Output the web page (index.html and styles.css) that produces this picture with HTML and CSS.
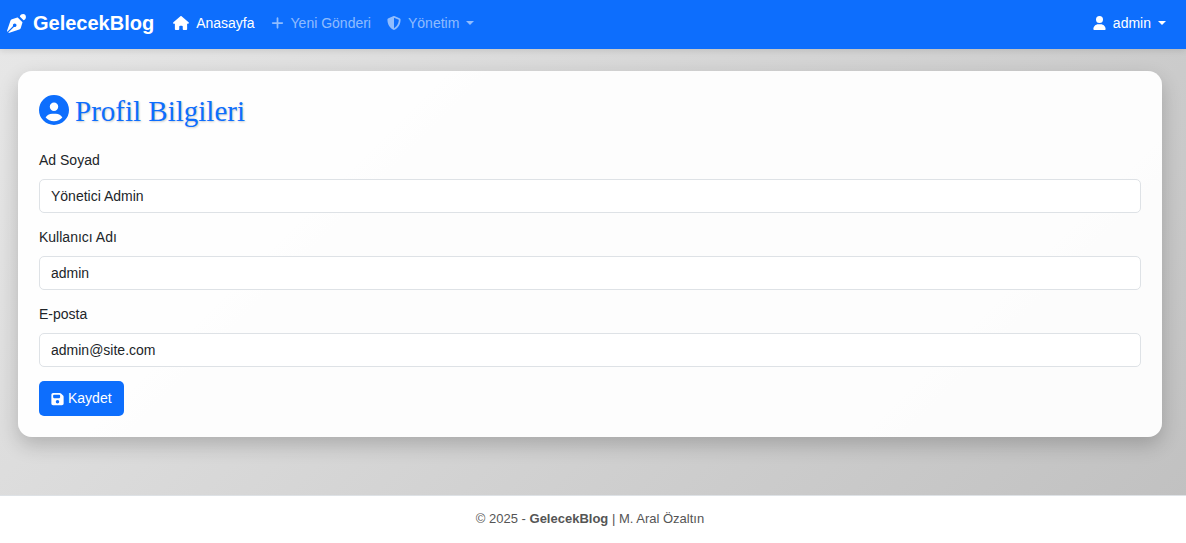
FILE: index.html
```html
<!DOCTYPE html>
<html lang="tr">
<head>
<meta charset="utf-8">
<meta name="viewport" content="width=device-width, initial-scale=1">
<title>Profil Bilgileri - GelecekBlog</title>
<link rel="stylesheet" href="styles.css">
</head>
<body>
<header class="navbar">
  <a class="brand" href="#">
    <svg class="brand-icon" viewBox="0 0 512 512" aria-hidden="true"><path d="M345 66C362 22 394 2 434 2C480 2 510 32 510 78C510 118 490 150 446 167ZM288 94.6l-9.2 2.8L134.7 140.6c-19.9 6-35.7 21.2-42.3 41L3.8 445.8c-3.8 11.3-1 23.9 7.3 32.4L164.7 324.7c-3-6.3-4.7-13.3-4.7-20.7c0-26.5 21.5-48 48-48s48 21.5 48 48s-21.5 48-48 48c-7.4 0-14.4-1.7-20.7-4.7L33.7 500.9c8.6 8.3 21.1 11.2 32.4 7.3l264.3-88.6c19.7-6.6 35-22.4 41-42.3l43.2-144.1 2.7-9.2L288 94.6z"/></svg>
    GelecekBlog
  </a>
  <nav class="nav">
    <a class="nav-link active" href="#">
      <svg class="icon-wide" viewBox="0 0 576 512" aria-hidden="true"><path d="M575.8 255.5c0 18-15 32.1-32 32.1h-32l.7 160.2c0 2.7-.2 5.4-.5 8.1V472c0 22.1-17.9 40-40 40H456c-1.1 0-2.2 0-3.3-.1c-1.4 .1-2.8 .1-4.2 .1H416 392c-22.1 0-40-17.9-40-40V448 384c0-17.7-14.3-32-32-32H256c-17.7 0-32 14.3-32 32v64 24c0 22.1-17.9 40-40 40H160 128.1c-1.5 0-3-.1-4.5-.2c-1.2 .1-2.4 .2-3.6 .2H104c-22.1 0-40-17.9-40-40V360c0-.9 0-1.9 .1-2.8V287.6H32c-18 0-32-14-32-32.1c0-9 3-17 10-24L266.4 8c7-7 15-8 22-8s15 2 21 7L564.8 231.5c8 7 12 15 11 24z"/></svg>
      Anasayfa
    </a>
    <a class="nav-link" href="#">
      <svg class="icon-narrow" viewBox="0 0 448 512" aria-hidden="true"><path d="M256 80c0-17.7-14.3-32-32-32s-32 14.3-32 32V224H48c-17.7 0-32 14.3-32 32s14.3 32 32 32H192V432c0 17.7 14.3 32 32 32s32-14.3 32-32V288H400c17.7 0 32-14.3 32-32s-14.3-32-32-32H256V80z"/></svg>
      Yeni Gönderi
    </a>
    <button class="nav-link caret" type="button" aria-haspopup="true">
      <svg class="icon" viewBox="0 0 512 512" aria-hidden="true"><path d="M256 0c4.6 0 9.2 1 13.4 2.9L457.7 82.8c22 9.3 38.4 31 38.3 57.2c-.5 99.2-41.3 280.7-213.6 363.2c-16.7 8-36.1 8-52.8 0C57.3 420.7 16.5 239.2 16 140c-.1-26.2 16.3-47.9 38.3-57.2L242.7 2.9C246.8 1 251.4 0 256 0zm0 66.8V444.8C394 378 431.1 230.1 432 141.4L256 66.8l0 0z"/></svg>
      Yönetim
    </button>
  </nav>
  <button class="nav-link active caret user-menu" type="button" aria-haspopup="true">
    <svg class="icon-narrow" viewBox="0 0 448 512" aria-hidden="true"><path d="M224 256A128 128 0 1 0 224 0a128 128 0 1 0 0 256zm-45.7 48C79.8 304 0 383.8 0 482.3C0 498.7 13.3 512 29.7 512H418.3c16.4 0 29.7-13.3 29.7-29.7C448 383.8 368.2 304 269.7 304H178.3z"/></svg>
    admin
  </button>
</header>
<main class="content">
  <section class="card">
    <h1 class="title">
      <svg class="title-icon" viewBox="0 0 512 512" aria-hidden="true"><path d="M399 384.2C376.9 345.8 335.4 320 288 320H224c-47.4 0-88.9 25.8-111 64.2c35.2 39.2 86.2 63.8 143 63.8s107.8-24.7 143-63.8zM0 256a256 256 0 1 1 512 0A256 256 0 1 1 0 256zm256 16a72 72 0 1 0 0-144 72 72 0 1 0 0 144z"/></svg>
      Profil Bilgileri
    </h1>
    <form class="form">
      <div class="field">
        <label for="fullname">Ad Soyad</label>
        <input id="fullname" type="text" value="Yönetici Admin">
      </div>
      <div class="field">
        <label for="username">Kullanıcı Adı</label>
        <input id="username" type="text" value="admin">
      </div>
      <div class="field">
        <label for="email">E-posta</label>
        <input id="email" type="email" value="admin@site.com">
      </div>
      <button class="save" type="submit">
        <svg class="icon-narrow" viewBox="0 0 448 512" aria-hidden="true"><path d="M64 32C28.7 32 0 60.7 0 96V416c0 35.3 28.7 64 64 64H384c35.3 0 64-28.7 64-64V173.3c0-17-6.7-33.3-18.7-45.3L352 50.7C340 38.7 323.7 32 306.7 32H64zm0 96c0-17.7 14.3-32 32-32H288c17.7 0 32 14.3 32 32v64c0 17.7-14.3 32-32 32H96c-17.7 0-32-14.3-32-32V128zM224 288a64 64 0 1 1 0 128 64 64 0 1 1 0-128z"/></svg>
        Kaydet
      </button>
    </form>
  </section>
</main>
<footer class="footer">
  <p>© 2025 - <strong>GelecekBlog</strong> | M. Aral Özaltın</p>
</footer>
</body>
</html>
```
FILE: styles.css
```css
* {
  box-sizing: border-box;
}

body {
  margin: 0;
  min-height: 100vh;
  display: flex;
  flex-direction: column;
  background: linear-gradient(135deg, #e8e8e8, #c0c0c0);
  color: #212529;
  font: 14px/21px "Liberation Sans", Arial, sans-serif;
}

svg {
  flex: none;
  fill: currentColor;
  height: 14px;
}

.icon { width: 14px; }
.icon-wide { width: 16px; }
.icon-narrow { width: 13px; }

.navbar {
  display: flex;
  align-items: center;
  padding: 8px 20px 11px 7px;
  background: #0d6efd;
  box-shadow: 0 2px 6px rgba(0, 0, 0, 0.1);
}

.brand {
  display: flex;
  align-items: center;
  gap: 7px;
  margin-right: 19px;
  color: #fff;
  font-size: 20px;
  font-weight: 700;
  line-height: 30px;
  text-decoration: none;
}

.brand-icon {
  width: 19px;
  height: 19px;
}

.nav {
  display: flex;
  gap: 16px;
}

.nav-link {
  display: flex;
  align-items: center;
  gap: 7px;
  padding: 0;
  border: 0;
  background: none;
  color: rgba(255, 255, 255, 0.55);
  font: inherit;
  text-decoration: none;
}

.nav-link.active {
  color: #fff;
}

.caret::after {
  content: "";
  border: 4px solid transparent;
  border-top-color: currentColor;
  border-bottom: 0;
}

.user-menu {
  margin-left: auto;
}

.content {
  flex: 1;
  padding: 22px 24px 56px 18px;
}

.card {
  padding: 21px;
  border-radius: 14px;
  background: rgba(255, 255, 255, 0.95);
  box-shadow: 0 8px 20px rgba(0, 0, 0, 0.2);
}

.title {
  display: flex;
  align-items: flex-start;
  gap: 6px;
  margin: 0 0 23px;
  padding-top: 3px;
  color: #0d6efd;
  font: 400 29px/32px "Liberation Serif", "Times New Roman", serif;
  text-shadow: 1px 1px 2px rgba(0, 0, 0, 0.2);
}

.title-icon {
  width: 30px;
  height: 30px;
}

.field {
  display: flex;
  flex-direction: column;
  gap: 8px;
  margin-bottom: 14px;
}

.field input {
  width: 100%;
  height: 34px;
  padding: 0 11px;
  border: 1px solid #dee2e6;
  border-radius: 5px;
  background: #fff;
  color: #212529;
  font: inherit;
}

.save {
  display: flex;
  align-items: center;
  gap: 4px;
  height: 35px;
  padding: 0 12px;
  border: 0;
  border-radius: 5px;
  background: #0d6efd;
  color: #fff;
  font: inherit;
}

.footer {
  padding: 12px 20px 14px 14px;
  border-top: 1px solid #dee2e6;
  background: #fff;
  color: #555;
  font-size: 13px;
  text-align: center;
}

.footer p {
  margin: 0;
}
```
